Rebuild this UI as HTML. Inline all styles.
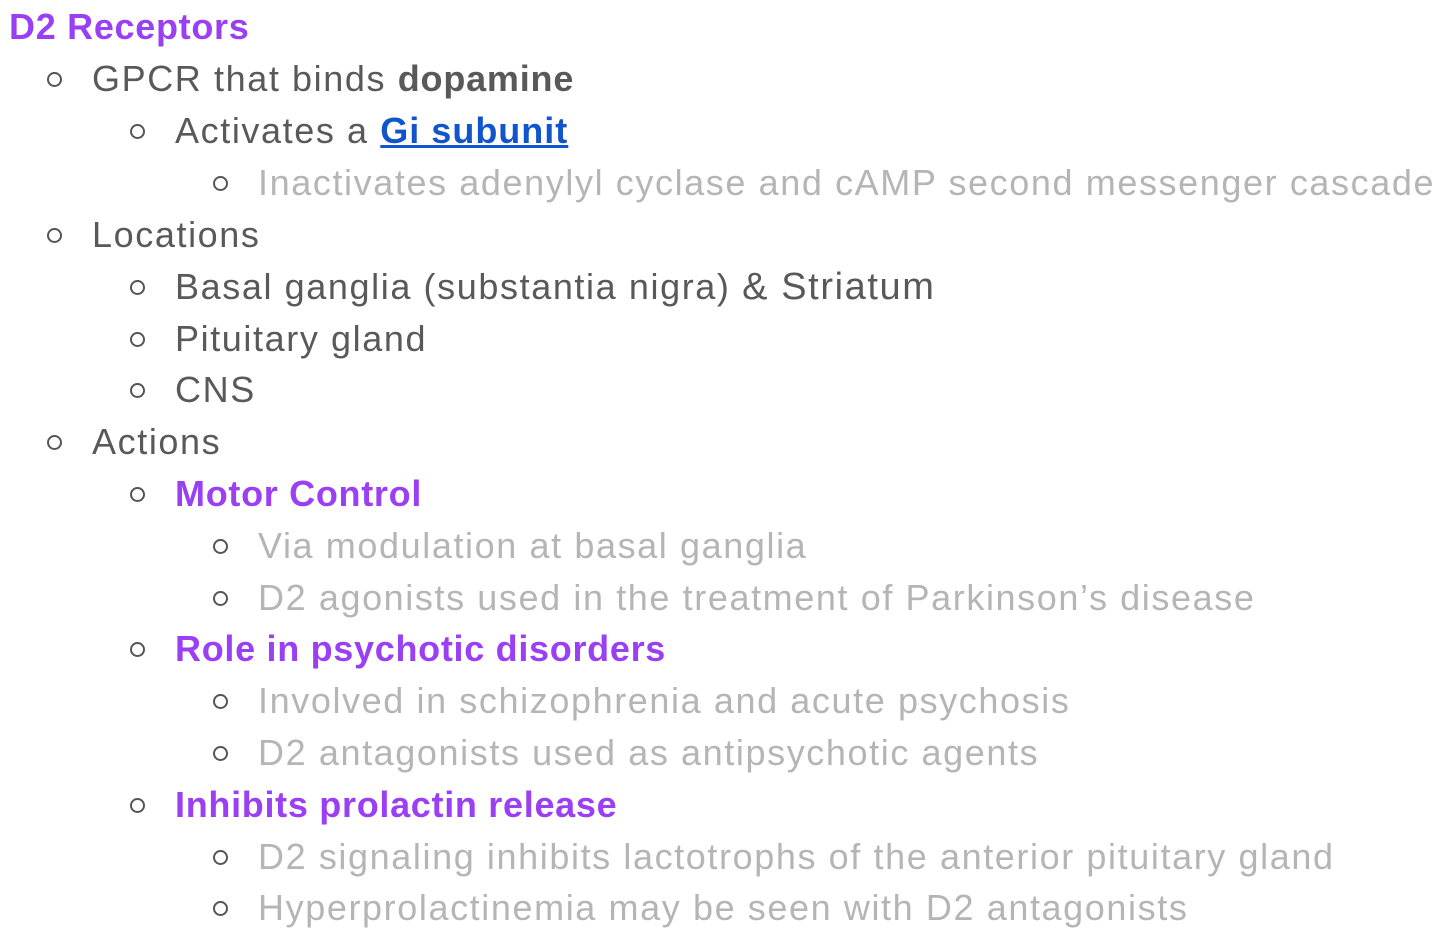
<!DOCTYPE html>
<html><head><style>
body{margin:0;width:1448px;height:940px;background:#fff;overflow:hidden;font-family:"Liberation Sans",sans-serif;}
.l{position:absolute;height:52px;line-height:52px;font-size:36px;white-space:nowrap;letter-spacing:1.6px;}
.l::before{content:"";position:absolute;left:-45px;top:19px;width:11px;height:11px;border:2px solid #555;border-radius:50%;}
.a{left:92px;color:#595959}.b{left:175px;color:#595959}.c{left:258px;color:#b5b5b5}
.p{color:#9b3ff5;font-weight:bold;letter-spacing:0.7px}
.h::before{display:none}
a{color:#1155cc;font-weight:bold;text-decoration:underline;letter-spacing:1px}
b{letter-spacing:0.8px}
</style></head><body>
<div class="l p h" style="left:9px;top:1px;">D2 Receptors</div>
<div class="l a" style="top:53px">GPCR that binds <b>dopamine</b></div>
<div class="l b" style="top:105px">Activates a <a>Gi subunit</a></div>
<div class="l c" style="top:157px">Inactivates adenylyl cyclase and cAMP second messenger cascade</div>
<div class="l a" style="top:209px">Locations</div>
<div class="l b" style="top:261px">Basal ganglia (substantia nigra) <span style="font-size:38px">&amp; Striatum</span></div>
<div class="l b" style="top:313px">Pituitary gland</div>
<div class="l b" style="top:364px">CNS</div>
<div class="l a" style="top:416px">Actions</div>
<div class="l b p" style="top:468px">Motor Control</div>
<div class="l c" style="top:520px">Via modulation at basal ganglia</div>
<div class="l c" style="top:572px">D2 agonists used in the treatment of Parkinson’s disease</div>
<div class="l b p" style="top:623px">Role in psychotic disorders</div>
<div class="l c" style="top:675px">Involved in schizophrenia and acute psychosis</div>
<div class="l c" style="top:727px">D2 antagonists used as antipsychotic agents</div>
<div class="l b p" style="top:779px">Inhibits prolactin release</div>
<div class="l c" style="top:831px">D2 signaling inhibits lactotrophs of the anterior pituitary gland</div>
<div class="l c" style="top:882px">Hyperprolactinemia may be seen with D2 antagonists</div>
</body></html>
